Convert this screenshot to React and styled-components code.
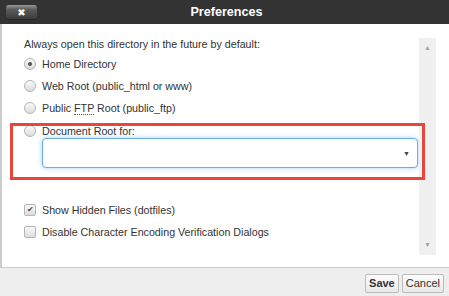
import React from 'react';
import styled, { createGlobalStyle } from 'styled-components';

const GlobalStyle = createGlobalStyle`
  html, body {
    margin: 0;
    padding: 0;
    background: #fff;
  }
  body {
    font-family: "Liberation Sans", Arial, sans-serif;
    color: #333;
  }
`;

const Dialog = styled.div`
  width: 449px;
  height: 296px;
  display: flex;
  flex-direction: column;
  overflow: hidden;
`;

const Header = styled.div`
  height: 24px;
  background: #333;
  display: flex;
  align-items: center;
`;

const CloseButton = styled.button`
  margin: 0 0 0 6px;
  width: 31px;
  height: 14px;
  padding: 0;
  border: none;
  border-radius: 3px;
  background: linear-gradient(#9a9a9a 0%, #5c5c5c 30%, #3c3c3c 100%);
  box-shadow: 0 1px 0 #1f2a2e;
  color: #fff;
  font: bold 10px "DejaVu Sans", sans-serif;
  display: flex;
  align-items: center;
  justify-content: center;
`;

const Title = styled.div`
  flex: 1;
  text-align: center;
  color: #fff;
  font-weight: bold;
  font-size: 12.6px;
  margin-right: 37px;
  padding-left: 4px;
`;

const Body = styled.div`
  flex: 1;
  display: flex;
  border-left: 2px solid #ccc;
  border-bottom: 1px solid #ccc;
  position: relative;
`;

const Content = styled.div`
  flex: 1;
  padding: 11px 0 0 22px;
  font-size: 10.7px;
`;

const Intro = styled.div`
  line-height: 18px;
`;

const Row = styled.label`
  display: flex;
  align-items: center;
  height: 22px;
  gap: 6px;
`;

const Radio = styled.span`
  width: 10px;
  height: 10px;
  border-radius: 50%;
  border: 1px solid #b5b5b5;
  background: linear-gradient(#fafafa, #dcdcdc);
  display: flex;
  align-items: center;
  justify-content: center;
  flex: none;

  &::after {
    content: '';
    width: 4px;
    height: 4px;
    border-radius: 50%;
    background: ${({ checked }) => (checked ? '#555' : 'transparent')};
  }
`;

const Check = styled.span`
  width: 10px;
  height: 10px;
  border-radius: 2px;
  border: 1px solid #b5b5b5;
  background: linear-gradient(#fafafa, #dcdcdc);
  display: flex;
  align-items: center;
  justify-content: center;
  flex: none;
  font-size: 8px;
  color: #444;
  line-height: 1;
`;

const Abbr = styled.span`
  border-bottom: 1px dotted #555;
  line-height: 11px;
`;

const DocRow = styled(Row)`
  height: 14px;
  margin-top: 5px;
`;

const SelectBox = styled.div`
  margin: 0 0 0 18px;
  width: 376px;
  height: 30px;
  box-sizing: border-box;
  border: 1px solid #66afe9;
  border-radius: 4px;
  box-shadow: 0 0 5px rgba(102, 175, 233, 0.6);
  background: #fff;
  display: flex;
  align-items: center;
  justify-content: flex-end;
  padding-right: 7px;
  color: #444;
  font-size: 7px;
`;

const Options = styled.div`
  margin-top: 31px;
`;

const Highlight = styled.div`
  position: absolute;
  left: 8px;
  top: 99px;
  width: 415px;
  height: 57px;
  box-sizing: border-box;
  border: 3px solid #e8453c;
  pointer-events: none;
`;

const Scrollbar = styled.div`
  width: 17px;
  margin: 14px 13px 12px 0;
  background: #f0f0f0;
  display: flex;
  flex-direction: column;
  justify-content: space-between;
  align-items: center;
  padding: 6px 0;
  box-sizing: border-box;
  color: #a3a3a3;
  font-size: 7px;
  line-height: 8px;
`;

const Footer = styled.div`
  height: 28px;
  background: #eee;
  display: flex;
  justify-content: flex-end;
  align-items: center;
  gap: 3px;
  padding: 2px 5px 0 0;
  box-sizing: border-box;
`;

const Button = styled.button`
  height: 19px;
  padding: 0 3px;
  border: 1px solid #bbb;
  border-radius: 2px;
  background: linear-gradient(#fdfdfd, #e8e8e8);
  font: ${({ primary }) => (primary ? 'bold' : 'normal')} 11px "Liberation Sans", Arial, sans-serif;
  color: #333;
`;

const radios = [
  { label: 'Home Directory', checked: true },
  { label: 'Web Root (public_html or www)' },
];

const App = () => (
  <Dialog>
    <GlobalStyle />
    <Header>
      <CloseButton>✖</CloseButton>
      <Title>Preferences</Title>
    </Header>
    <Body>
      <Content>
        <Intro>Always open this directory in the future by default:</Intro>
        {radios.map((r) => (
          <Row key={r.label}>
            <Radio checked={r.checked} />
            {r.label}
          </Row>
        ))}
        <Row>
          <Radio />
          <span>
            Public <Abbr>FTP</Abbr> Root (public_ftp)
          </span>
        </Row>
        <DocRow>
          <Radio />
          Document Root for:
        </DocRow>
        <SelectBox>▼</SelectBox>
        <Options>
          <Row>
            <Check>✔</Check>
            Show Hidden Files (dotfiles)
          </Row>
          <Row>
            <Check />
            Disable Character Encoding Verification Dialogs
          </Row>
        </Options>
      </Content>
      <Scrollbar>
        <span>▲</span>
        <span>▼</span>
      </Scrollbar>
      <Highlight />
    </Body>
    <Footer>
      <Button primary>Save</Button>
      <Button>Cancel</Button>
    </Footer>
  </Dialog>
);

export default App;
